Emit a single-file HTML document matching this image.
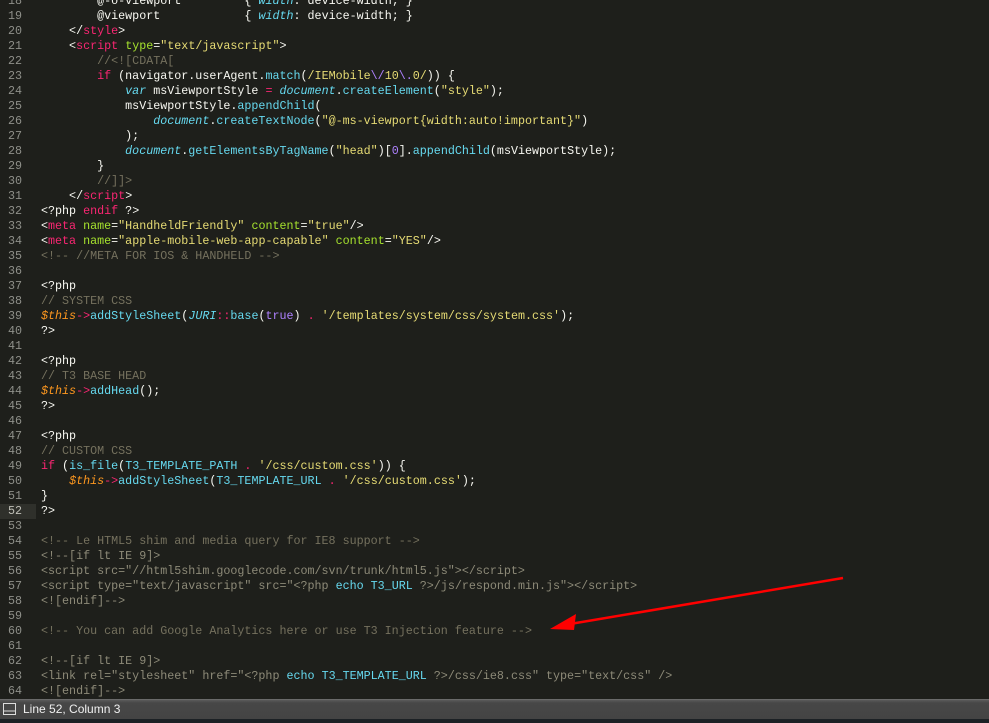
<!DOCTYPE html>
<html><head><meta charset="utf-8"><style>
html,body{margin:0;padding:0;width:989px;height:723px;overflow:hidden;background:#1e1f1b;}
#ed{position:absolute;left:0;top:-6px;width:989px;font-family:"Liberation Mono",monospace;font-size:11.7px;color:#f8f8f2;}
.l{height:15px;line-height:15px;white-space:pre;position:relative;}
.n{display:inline-block;width:22px;text-align:right;color:#8f908a;margin-right:19px;position:relative;}
.hl::before{content:"";position:absolute;left:0;top:0;width:36px;height:15px;background:#2f302b;}
.hl .n{color:#c0c0b8}
.c{color:#75715e}.k{color:#f92672}.s{color:#e6db74}.a{color:#a6e22e}.f{color:#66d9ef}
.v{color:#fd971f;font-style:italic}.p{color:#ae81ff}.i{color:#66d9ef;font-style:italic}.g{color:#8d8a78}
#sb{position:absolute;left:0;top:699px;width:989px;height:20px;background:linear-gradient(#5a5a5a,#474747 3px,#444);border-top:1px solid #6a6a6a;box-sizing:border-box;font-family:"Liberation Sans",sans-serif;font-size:12px;color:#f0f0f0;line-height:19px;}
#bt{position:absolute;left:0;top:719px;width:989px;height:4px;background:#1c2125;}
</style></head><body>
<div id="ed">
<div class="l"><span class="n">18</span>        @-o-viewport         { <span class="i">width</span>: device-width; }</div>
<div class="l"><span class="n">19</span>        @viewport            { <span class="i">width</span>: device-width; }</div>
<div class="l"><span class="n">20</span>    &lt;/<span class="k">style</span>&gt;</div>
<div class="l"><span class="n">21</span>    &lt;<span class="k">script</span> <span class="a">type</span>=<span class="s">"text/javascript"</span>&gt;</div>
<div class="l"><span class="n">22</span>        <span class="c">//&lt;![CDATA[</span></div>
<div class="l"><span class="n">23</span>        <span class="k">if</span> (navigator.userAgent.<span class="f">match</span>(<span class="s">/IEMobile</span><span class="p">\/</span><span class="s">10</span><span class="p">\.</span><span class="s">0/</span>)) {</div>
<div class="l"><span class="n">24</span>            <span class="i">var</span> msViewportStyle <span class="k">=</span> <span class="i">document</span>.<span class="f">createElement</span>(<span class="s">"style"</span>);</div>
<div class="l"><span class="n">25</span>            msViewportStyle.<span class="f">appendChild</span>(</div>
<div class="l"><span class="n">26</span>                <span class="i">document</span>.<span class="f">createTextNode</span>(<span class="s">"@-ms-viewport{width:auto!important}"</span>)</div>
<div class="l"><span class="n">27</span>            );</div>
<div class="l"><span class="n">28</span>            <span class="i">document</span>.<span class="f">getElementsByTagName</span>(<span class="s">"head"</span>)[<span class="p">0</span>].<span class="f">appendChild</span>(msViewportStyle);</div>
<div class="l"><span class="n">29</span>        }</div>
<div class="l"><span class="n">30</span>        <span class="c">//]]&gt;</span></div>
<div class="l"><span class="n">31</span>    &lt;/<span class="k">script</span>&gt;</div>
<div class="l"><span class="n">32</span>&lt;?php <span class="k">endif</span> ?&gt;</div>
<div class="l"><span class="n">33</span>&lt;<span class="k">meta</span> <span class="a">name</span>=<span class="s">"HandheldFriendly"</span> <span class="a">content</span>=<span class="s">"true"</span>/&gt;</div>
<div class="l"><span class="n">34</span>&lt;<span class="k">meta</span> <span class="a">name</span>=<span class="s">"apple-mobile-web-app-capable"</span> <span class="a">content</span>=<span class="s">"YES"</span>/&gt;</div>
<div class="l"><span class="n">35</span><span class="c">&lt;!-- //META FOR IOS &amp; HANDHELD --&gt;</span></div>
<div class="l"><span class="n">36</span></div>
<div class="l"><span class="n">37</span>&lt;?php</div>
<div class="l"><span class="n">38</span><span class="c">// SYSTEM CSS</span></div>
<div class="l"><span class="n">39</span><span class="v">$this</span><span class="k">-&gt;</span><span class="f">addStyleSheet</span>(<span class="i">JURI</span><span class="k">::</span><span class="f">base</span>(<span class="p">true</span>) <span class="k">.</span> <span class="s">'/templates/system/css/system.css'</span>);</div>
<div class="l"><span class="n">40</span>?&gt;</div>
<div class="l"><span class="n">41</span></div>
<div class="l"><span class="n">42</span>&lt;?php</div>
<div class="l"><span class="n">43</span><span class="c">// T3 BASE HEAD</span></div>
<div class="l"><span class="n">44</span><span class="v">$this</span><span class="k">-&gt;</span><span class="f">addHead</span>();</div>
<div class="l"><span class="n">45</span>?&gt;</div>
<div class="l"><span class="n">46</span></div>
<div class="l"><span class="n">47</span>&lt;?php</div>
<div class="l"><span class="n">48</span><span class="c">// CUSTOM CSS</span></div>
<div class="l"><span class="n">49</span><span class="k">if</span> (<span class="f">is_file</span>(<span class="f">T3_TEMPLATE_PATH</span> <span class="k">.</span> <span class="s">'/css/custom.css'</span>)) {</div>
<div class="l"><span class="n">50</span>    <span class="v">$this</span><span class="k">-&gt;</span><span class="f">addStyleSheet</span>(<span class="f">T3_TEMPLATE_URL</span> <span class="k">.</span> <span class="s">'/css/custom.css'</span>);</div>
<div class="l"><span class="n">51</span>}</div>
<div class="l hl"><span class="n">52</span>?&gt;</div>
<div class="l"><span class="n">53</span></div>
<div class="l"><span class="n">54</span><span class="c">&lt;!-- Le HTML5 shim and media query for IE8 support --&gt;</span></div>
<div class="l"><span class="n">55</span><span class="g">&lt;!--[if lt IE 9]&gt;</span></div>
<div class="l"><span class="n">56</span><span class="g">&lt;script src="//html5shim.googlecode.com/svn/trunk/html5.js"&gt;&lt;/script&gt;</span></div>
<div class="l"><span class="n">57</span><span class="g">&lt;script type="text/javascript" src="&lt;?php </span><span class="f">echo</span> <span class="f">T3_URL</span><span class="g"> ?&gt;/js/respond.min.js"&gt;&lt;/script&gt;</span></div>
<div class="l"><span class="n">58</span><span class="g">&lt;![endif]--&gt;</span></div>
<div class="l"><span class="n">59</span></div>
<div class="l"><span class="n">60</span><span class="c">&lt;!-- You can add Google Analytics here or use T3 Injection feature --&gt;</span></div>
<div class="l"><span class="n">61</span></div>
<div class="l"><span class="n">62</span><span class="g">&lt;!--[if lt IE 9]&gt;</span></div>
<div class="l"><span class="n">63</span><span class="g">&lt;link rel="stylesheet" href="&lt;?php </span><span class="f">echo</span> <span class="f">T3_TEMPLATE_URL</span><span class="g"> ?&gt;/css/ie8.css" type="text/css" /&gt;</span></div>
<div class="l"><span class="n">64</span><span class="g">&lt;![endif]--&gt;</span></div>
<div class="l"><span class="n">65</span></div>
</div>
<svg style="position:absolute;left:0;top:0" width="989" height="723">
<line x1="843" y1="578" x2="570" y2="624" stroke="#f00" stroke-width="2.5"/>
<polygon points="550,629 576,614 574,630" fill="#f00"/>
</svg>
<div id="sb"><svg style="position:absolute;left:3px;top:3px" width="13" height="12"><rect x="0.5" y="0.5" width="12" height="11" fill="none" stroke="#ddd"/><line x1="0" y1="8" x2="13" y2="8" stroke="#ddd"/></svg><span style="position:absolute;left:23px;top:0">Line 52, Column 3</span></div>
<div id="bt"></div>
</body></html>
